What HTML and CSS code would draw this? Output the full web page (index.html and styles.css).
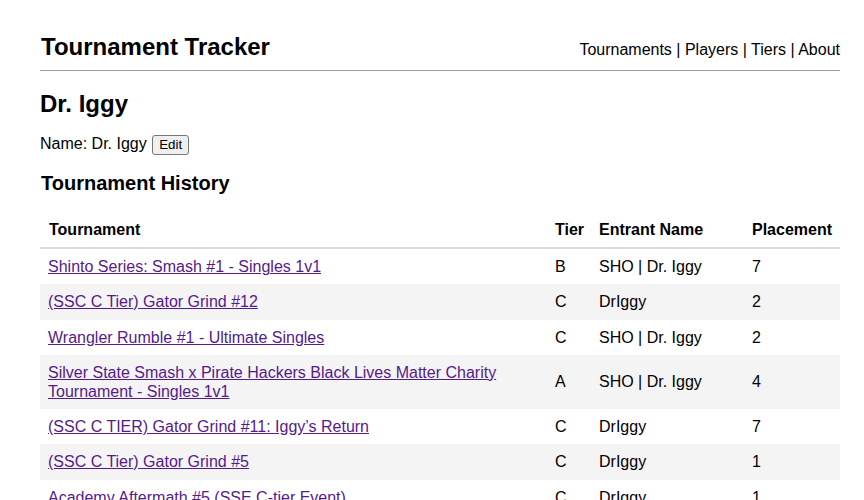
FILE: index.html
```html
<!DOCTYPE html>
<html lang="en">
<head>
<meta charset="utf-8">
<title>Dr. Iggy - Tournament Tracker</title>
<link rel="stylesheet" href="styles.css">
</head>
<body>
<div class="container">
  <header class="site-header">
    <div class="brand">Tournament Tracker</div>
    <nav class="nav">
      <a href="#">Tournaments</a> | <a href="#">Players</a> | <a href="#">Tiers</a> | <a href="#">About</a>
    </nav>
  </header>
  <h2 class="player-name">Dr. Iggy</h2>
  <div class="name-row">Name: Dr. Iggy <button class="edit-btn">Edit</button></div>
  <h3 class="section-title">Tournament History</h3>
  <table class="history">
    <colgroup>
      <col class="c-tour"><col class="c-tier"><col class="c-ent"><col class="c-place">
    </colgroup>
    <thead>
      <tr><th>Tournament</th><th>Tier</th><th>Entrant Name</th><th>Placement</th></tr>
    </thead>
    <tbody>
      <tr><td><a href="#">Shinto Series: Smash #1 - Singles 1v1</a></td><td>B</td><td>SHO | Dr. Iggy</td><td>7</td></tr>
      <tr><td><a href="#">(SSC C Tier) Gator Grind #12</a></td><td>C</td><td>DrIggy</td><td>2</td></tr>
      <tr><td><a href="#">Wrangler Rumble #1 - Ultimate Singles</a></td><td>C</td><td>SHO | Dr. Iggy</td><td>2</td></tr>
      <tr><td><a href="#">Silver State Smash x Pirate Hackers Black Lives Matter Charity Tournament - Singles 1v1</a></td><td>A</td><td>SHO | Dr. Iggy</td><td>4</td></tr>
      <tr><td><a href="#">(SSC C TIER) Gator Grind #11: Iggy’s Return</a></td><td>C</td><td>DrIggy</td><td>7</td></tr>
      <tr><td><a href="#">(SSC C Tier) Gator Grind #5</a></td><td>C</td><td>DrIggy</td><td>1</td></tr>
      <tr><td><a href="#">Academy Aftermath #5 (SSE C-tier Event)</a></td><td>C</td><td>DrIggy</td><td>1</td></tr>
    </tbody>
  </table>
</div>
</body>
</html>
```

FILE: styles.css
```css
html, body {
  margin: 0;
  padding: 0;
  background: #fff;
}
body {
  font-family: "Liberation Sans", Arial, sans-serif;
  font-size: 16px;
  color: #000;
}
.container {
  width: 800px;
  margin-left: 40px;
}
.site-header {
  display: flex;
  justify-content: space-between;
  align-items: baseline;
  padding-top: 33px;
  padding-bottom: 9px;
  border-bottom: 1px solid #9a9a9a;
}
.brand {
  font-size: 24px;
  font-weight: bold;
  line-height: 28px;
  padding-left: 1px;
}
.nav {
  font-size: 16px;
  line-height: 20px;
}
.nav a {
  color: #000;
  text-decoration: none;
}
.player-name {
  font-size: 24px;
  font-weight: bold;
  line-height: 28px;
  margin: 19px 0 0;
}
.name-row {
  margin-top: 16px;
  line-height: 20px;
  height: 20px;
}
.edit-btn {
  font-family: "Liberation Sans", Arial, sans-serif;
  font-size: 13.33px;
  color: #000;
  background: #efefef;
  border: 1px solid #767676;
  border-radius: 3px;
  padding: 1px 6px;
  line-height: 16px;
  height: 20px;
  vertical-align: baseline;
  margin-left: 1px;
}
.section-title {
  font-size: 20px;
  font-weight: bold;
  line-height: 24px;
  margin: 17px 0 0;
  padding-left: 1px;
}
.history {
  width: 800px;
  margin-top: 17px;
  border-collapse: collapse;
  table-layout: fixed;
}
.c-tour { width: 507px; }
.c-tier { width: 44px; }
.c-ent { width: 153px; }
.c-place { width: 96px; }
.history th,
.history td {
  padding: 8px;
  line-height: 1.2;
  text-align: left;
  vertical-align: middle;
}
.history th {
  font-weight: bold;
  border-bottom: 2px solid #dcdcdc;
}
.history th:first-child {
  padding-left: 9px;
}
.history tbody tr:nth-child(even) td {
  background: #f4f4f4;
}
.history a {
  color: #551a8b;
  text-decoration: underline;
}
```
